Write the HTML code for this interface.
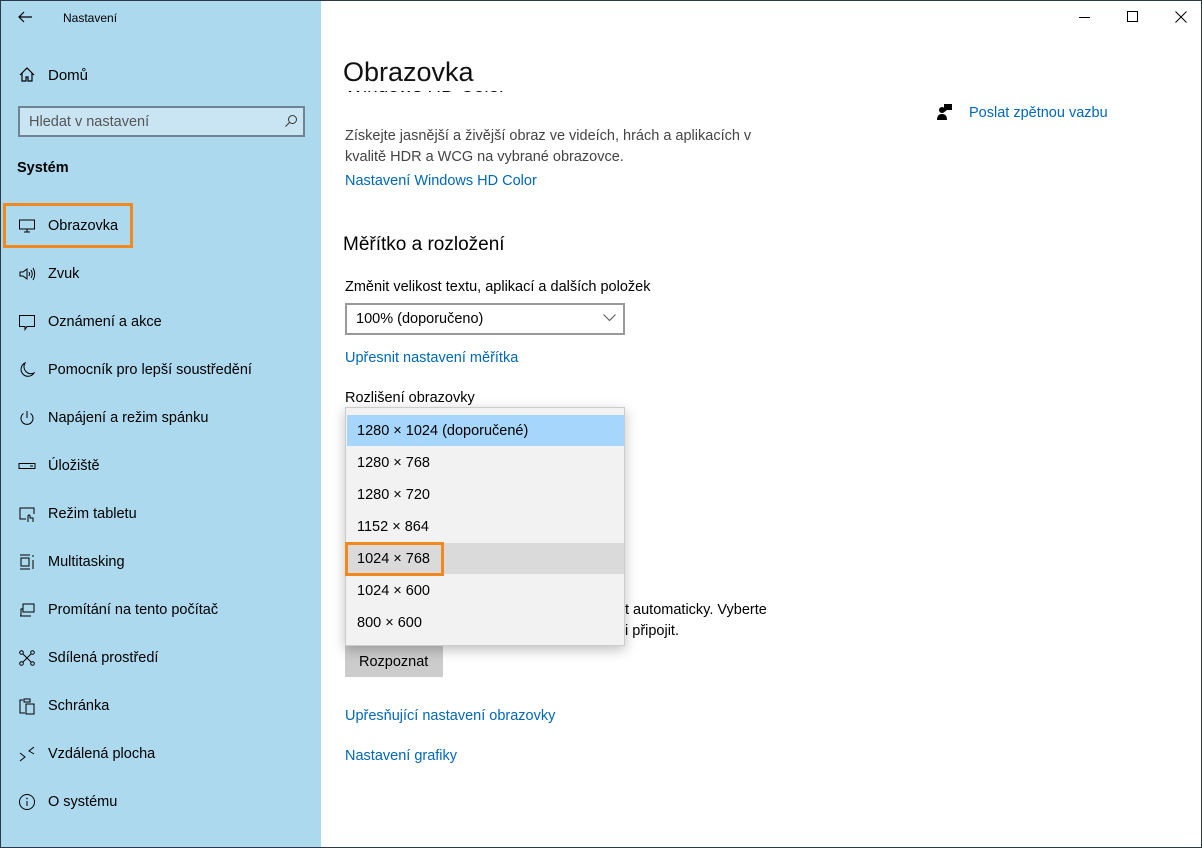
<!DOCTYPE html>
<html><head><meta charset="utf-8"><style>
*{margin:0;padding:0;box-sizing:border-box}
body{width:1202px;height:848px;overflow:hidden;font-family:"Liberation Sans",sans-serif;background:#fff;position:relative;color:#000}
.win{position:absolute;left:0;top:0;width:1202px;height:848px;border:1px solid #2b3a48;}
.side{position:absolute;left:1px;top:1px;width:320px;height:846px;background:#acd9ee}
.t{position:absolute;white-space:nowrap}
.nav{position:absolute;left:47px;font-size:14.5px;color:#000}
.ic{position:absolute;left:17px;width:18px;height:18px}
.link{color:#0067b8;font-size:14.5px}
.dd{position:absolute;left:345px;top:407px;width:280px;height:239px;background:#f2f2f2;border:1px solid #ccc;box-shadow:0 4px 12px rgba(0,0,0,.25)}
.it{position:absolute;left:1px;width:277px;height:31px;font-size:14.5px;padding-left:10px;line-height:33px}
</style></head><body>
<div class="win"></div>
<div class="side">
 <svg class="t" style="left:16px;top:9px" width="16" height="14" viewBox="0 0 16 14"><path d="M15 7H2M7 2L2 7l5 5" fill="none" stroke="#000" stroke-width="1.2"/></svg>
 <div class="t" style="left:62px;top:10px;font-size:12px">Nastavení</div>
 <svg class="ic" style="top:65px;left:17px" viewBox="0 0 18 18"><path d="M2 9L9 2l7 7M4 7v8h4v-4h2v4h4V7" fill="none" stroke="#000" stroke-width="1.2"/></svg>
 <div class="nav" style="top:66px;font-size:15px">Domů</div>
 <div class="t" style="left:17px;top:105px;width:287px;height:31px;border:2px solid #6f8390;background:#c9e4f2"></div>
 <div class="t" style="left:28px;top:113px;font-size:14.5px;color:#555">Hledat v nastavení</div>
 <svg class="t" style="left:283px;top:113px" width="14" height="14" viewBox="0 0 14 14"><circle cx="8.5" cy="5.5" r="4" fill="none" stroke="#333"/><path d="M5.5 8.5L1.5 12.5" stroke="#333"/></svg>
 <div class="t" style="left:16px;top:159px;font-size:14.5px;font-weight:bold">Systém</div>
 <div class="t" style="left:2px;top:202px;width:130px;height:45px;border:3px solid #f0891e"></div>
 <svg class="ic" style="top:216px" viewBox="0 0 18 18"><rect x="1.5" y="3" width="15" height="9" fill="none" stroke="#000"/><path d="M6 15h6M9 12v3" stroke="#000"/></svg>
 <div class="nav" style="top:217px">Obrazovka</div>
 <svg class="ic" style="top:264px" viewBox="0 0 18 18"><path d="M2 7h3l4-3v10l-4-3H2z" fill="none" stroke="#000"/><path d="M11 7q1 2 0 4M13 5q2.5 4 0 8M15 3q3.5 6 0 12" fill="none" stroke="#000"/></svg>
 <div class="nav" style="top:265px">Zvuk</div>
 <svg class="ic" style="top:312px" viewBox="0 0 18 18"><path d="M1.5 2.5h15v11H9l-2 3v-3H1.5z" fill="none" stroke="#000"/></svg>
 <div class="nav" style="top:313px">Oznámení a akce</div>
 <svg class="ic" style="top:360px" viewBox="0 0 18 18"><path d="M7 2A7 7 0 1 0 16 12 7 7 0 0 1 7 2z" fill="none" stroke="#000"/></svg>
 <div class="nav" style="top:361px">Pomocník pro lepší soustředění</div>
 <svg class="ic" style="top:408px" viewBox="0 0 18 18"><path d="M5.5 4.5a6 6 0 1 0 7 0M9 2v7" fill="none" stroke="#000"/></svg>
 <div class="nav" style="top:409px">Napájení a režim spánku</div>
 <svg class="ic" style="top:456px" viewBox="0 0 18 18"><rect x="1" y="6.5" width="16" height="5" fill="none" stroke="#000"/><path d="M12 9h3" stroke="#000"/></svg>
 <div class="nav" style="top:457px">Úložiště</div>
 <svg class="ic" style="top:504px" viewBox="0 0 18 18"><path d="M8 14H2V3h14v6" fill="none" stroke="#000"/><path d="M10 17v-6a1 1 0 0 1 2 0v2h3v4" fill="none" stroke="#000"/></svg>
 <div class="nav" style="top:505px">Režim tabletu</div>
 <svg class="ic" style="top:552px" viewBox="0 0 18 18"><path d="M2 2h10M2 16h10M3 5h8v8H3zM15 2v2M15 7v9" fill="none" stroke="#000"/></svg>
 <div class="nav" style="top:553px">Multitasking</div>
 <svg class="ic" style="top:600px" viewBox="0 0 18 18"><rect x="5" y="3" width="11" height="8" fill="none" stroke="#000"/><path d="M2 15h11M3 15V8h2" fill="none" stroke="#000"/></svg>
 <div class="nav" style="top:601px">Promítání na tento počítač</div>
 <svg class="ic" style="top:648px" viewBox="0 0 18 18"><circle cx="3.5" cy="3.5" r="1.8" fill="none" stroke="#000"/><circle cx="14.5" cy="3.5" r="1.8" fill="none" stroke="#000"/><circle cx="3.5" cy="14.5" r="1.8" fill="none" stroke="#000"/><circle cx="14.5" cy="14.5" r="1.8" fill="none" stroke="#000"/><path d="M5 5l8 8M13 5l-8 8" stroke="#000"/></svg>
 <div class="nav" style="top:649px">Sdílená prostředí</div>
 <svg class="ic" style="top:696px" viewBox="0 0 18 18"><path d="M5 3H2v13h5M6 2h6v3H6zM8 7h8v10H8z" fill="none" stroke="#000"/></svg>
 <div class="nav" style="top:697px">Schránka</div>
 <svg class="ic" style="top:744px" viewBox="0 0 18 18"><path d="M2 8l5 4-5 4M16 2l-5 4 5 3" fill="none" stroke="#000"/></svg>
 <div class="nav" style="top:745px">Vzdálená plocha</div>
 <svg class="ic" style="top:792px" viewBox="0 0 18 18"><circle cx="9" cy="9" r="7.5" fill="none" stroke="#000"/><path d="M9 8v5" stroke="#000"/><circle cx="9" cy="5.5" r=".8"/></svg>
 <div class="nav" style="top:793px">O systému</div>
</div>

<div class="t" style="left:1079px;top:17px;width:11px;height:1px;background:#000"></div>
<div class="t" style="left:1127px;top:11px;width:11px;height:11px;border:1px solid #000"></div>
<svg class="t" style="left:1175px;top:11px" width="12" height="12" viewBox="0 0 12 12"><path d="M0.5 0.5l11 11M11.5 0.5l-11 11" stroke="#000"/></svg>

<div class="t" style="left:343px;top:57px;font-size:27px;color:#111">Obrazovka</div>
<div class="t" style="left:345px;top:91px;height:9px;width:200px;overflow:hidden"><div style="position:absolute;top:-15px;font-size:19px">Windows HD Color</div></div>
<div class="t" style="left:345px;top:126px;font-size:14.5px;color:#444;line-height:21px">Získejte jasnější a živější obraz ve videích, hrách a aplikacích v<br>kvalitě HDR a WCG na vybrané obrazovce.</div>
<div class="t link" style="left:345px;top:173px">Nastavení Windows HD Color</div>

<svg class="t" style="left:937px;top:104px" width="16" height="16" viewBox="0 0 16 16"><rect x="7" y="0" width="8" height="6"/><path d="M8 6l-2 3 4-3z"/><circle cx="5" cy="6" r="3"/><path d="M0 16q0-6 5-6t5 6z"/></svg>
<div class="t link" style="left:969px;top:105px">Poslat zpětnou vazbu</div>

<div class="t" style="left:343px;top:234px;font-size:19px">Měřítko a rozložení</div>
<div class="t" style="left:345px;top:279px;font-size:14.5px">Změnit velikost textu, aplikací a dalších položek</div>
<div class="t" style="left:345px;top:303px;width:280px;height:32px;border:2px solid #999"></div>
<div class="t" style="left:356px;top:311px;font-size:14.5px">100% (doporučeno)</div>
<svg class="t" style="left:603px;top:314px" width="13" height="8" viewBox="0 0 13 8"><path d="M0.5 0.5l6 6 6-6" fill="none" stroke="#555"/></svg>
<div class="t link" style="left:345px;top:350px">Upřesnit nastavení měřítka</div>
<div class="t" style="left:345px;top:390px;font-size:14.5px">Rozlišení obrazovky</div>

<div class="t" style="left:625px;top:600px;font-size:14.5px;line-height:21px">t automaticky. Vyberte<br>i připojit.</div>
<div class="t" style="left:345px;top:646px;width:98px;height:31px;background:#ccc"></div>
<div class="t" style="left:359px;top:654px;font-size:14.5px">Rozpoznat</div>
<div class="t link" style="left:345px;top:708px">Upřesňující nastavení obrazovky</div>
<div class="t link" style="left:345px;top:748px">Nastavení grafiky</div>

<div class="dd">
 <div class="it" style="top:7px;background:#a6d6fb">1280 × 1024 (doporučené)</div>
 <div class="it" style="top:39px">1280 × 768</div>
 <div class="it" style="top:71px">1280 × 720</div>
 <div class="it" style="top:103px">1152 × 864</div>
 <div class="it" style="top:135px;background:#dadada">1024 × 768</div>
 <div class="it" style="top:167px">1024 × 600</div>
 <div class="it" style="top:199px">800 × 600</div>
</div>
<div class="t" style="left:345px;top:542px;width:99px;height:34px;border:3px solid #f0891e"></div>
</body></html>
